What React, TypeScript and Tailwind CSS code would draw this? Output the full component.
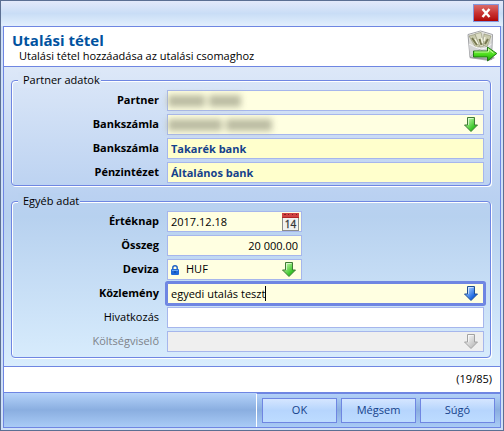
import { useId, type ReactNode } from "react";
import { clsx } from "clsx";

const arrowColors = {
  green: { edge: "#3f7a35", from: "#b4f29a", to: "#35c425" },
  blue: { edge: "#1f4f94", from: "#9cc8ff", to: "#1a66e0" },
  gray: { edge: "#a2a2a2", from: "#f0f0f0", to: "#c6c6c6" },
};

function ArrowIcon({ color }: { color: keyof typeof arrowColors }) {
  const id = useId();
  const c = arrowColors[color];
  return (
    <svg width="14" height="15" viewBox="0 0 14 15" aria-hidden="true">
      <defs>
        <linearGradient id={id} x1="0" y1="0" x2="1" y2="1">
          <stop offset="0.2" stopColor={c.from} />
          <stop offset="0.7" stopColor={c.to} />
        </linearGradient>
      </defs>
      <path d="M3.5 .5h7v7.500h3L7 14.500.500 8h3z" fill={`url(#${id})`} stroke={c.edge} />
      <path d="M4.500 8V1.500h5" fill="none" stroke="#fff" strokeOpacity=".55" />
    </svg>
  );
}

function CalendarIcon() {
  return (
    <svg width="17" height="18" viewBox="0 0 17 18" aria-hidden="true">
      <rect x=".5" y=".5" width="16" height="17" fill="#f1f1ef" stroke="#8c8c8c" />
      <rect width="17" height="5" fill="#cf4242" />
      <path d="M0 4.500h17" stroke="#b02626" />
      <path d="M2 1.500h2M6 1.500h1M10 1.500h1M14 1.500h1" stroke="#7e2020" />
      <text x="8.500" y="15" textAnchor="middle" fontSize="10" fill="#333" stroke="#333" strokeWidth=".3" fontFamily="Open Sans, sans-serif">
        14
      </text>
    </svg>
  );
}

function LockIcon() {
  return (
    <svg width="8" height="10" viewBox="0 0 8 10" className="shrink-0" aria-hidden="true">
      <path d="M1.800 5V2.800a2.200 2 0 0 1 4.400 0V5" fill="none" stroke="#1c5fc4" strokeWidth="1.400" />
      <rect y="4" width="8" height="6" rx="1" fill="#1d68d8" />
      <path d="M1 5.500h6" stroke="#69a5f5" />
      <path d="M4 6v2" stroke="#0c3e8c" />
    </svg>
  );
}

function EnvelopeIcon() {
  return (
    <svg width="31" height="32" viewBox="0 0 31 32" aria-hidden="true">
      <defs>
        <linearGradient id="paper" x1="0" y1="0" x2="0" y2="1">
          <stop offset="0" stopColor="#f6f6f6" />
          <stop offset="1" stopColor="#b9babd" />
        </linearGradient>
        <linearGradient id="send" x1="0" y1="0" x2="0" y2="1">
          <stop offset="0" stopColor="#a5f56c" />
          <stop offset="0.5" stopColor="#4fe01f" />
          <stop offset="1" stopColor="#1c9c0a" />
        </linearGradient>
      </defs>
      <path d="M2 28l20 3 6-3-4-3z" fill="#000" opacity=".3" />
      <path d="M1 4.500L13.500 1l12 3.500-1 25L3 27.500z" fill="url(#paper)" stroke="#8a8c8f" strokeWidth=".8" />
      <path d="M2 5L13.500 1.500l11 4-1 9-9.500 4L3 14z" fill="#dcdcd2" />
      <g stroke="#85866a" strokeWidth=".5">
        <path d="M2 6l6-1.500 6 11-5 2.500z" fill="#c9caac" />
        <path d="M8 4l6-1.500 3 13.500-4 1z" fill="#dcddc4" />
        <path d="M17 4l7 2-4 11-4-2z" fill="#c9caac" />
      </g>
      <path d="M5 8l5 7M12.500 9l2 6M21 9l-3 5" stroke="#76774f" strokeWidth="2" />
      <path d="M8 9l3 5M14.500 8l1 5M18 7l-1 4" stroke="#f4f4e2" strokeWidth="1.300" />
      <path d="M2 14l6 3 6 2 5-1 5.500-4-.5 14.500-21-2z" fill="#d4d5d7" />
      <path d="M3 27l10-8L24 28" fill="none" stroke="#a2a4a7" strokeWidth=".7" />
      <path d="M2 14l6 3 6 2 5-1 5.500-4" fill="none" stroke="#f6f6f6" />
      <path d="M6.500 21h14v-4l9.300 6.500-9.300 7.500v-4h-14z" fill="url(#send)" stroke="#17730c" strokeWidth=".9" />
      <path d="M7.500 22h14v-2.800l5 4" fill="none" stroke="#d8ffb8" strokeWidth=".8" />
    </svg>
  );
}

function Group({ title, legendClass, className, children }: { title: string; legendClass: string; className?: string; children: ReactNode }) {
  return (
    <fieldset className={clsx("min-w-0 rounded border border-[#6f86e2] pr-[6px] pl-2 pt-[2px] shadow-[1px_1px_0_#fff,inset_1px_1px_0_#fff]", className)}>
      <legend className={clsx("-ml-[2px] h-4 pr-px pl-[5px] leading-4", legendClass)}>{title}</legend>
      <div className="flex flex-col gap-[3px]">{children}</div>
    </fieldset>
  );
}

function Row({ id, label, light, children }: { id: string; label: string; light?: boolean; children: ReactNode }) {
  return (
    <div className="flex h-[21px] items-center gap-2">
      <label htmlFor={id} className={clsx("w-[139px] shrink-0 text-right", light ? "font-normal" : "font-bold", id === "cost" && "text-[#7d8289]")}>
        {label}
      </label>
      {children}
    </div>
  );
}

const box = "relative flex h-[21px] items-center border";
const plain = "border-[#a6b6ec]";
const control = "h-full min-w-0 flex-1 appearance-none bg-transparent px-[3px] outline-none";
const iconSlot = "pointer-events-none absolute right-[5px]";

// Redacted value: soft gray smudges over an empty control
function Redacted({ parts }: { parts: string[] }) {
  return (
    <div className="pointer-events-none absolute left-0 flex gap-1 blur-[3px]" aria-hidden="true">
      {parts.map((w) => (
        <span key={w} className={clsx("h-3 bg-[#bcbda3]", w)} />
      ))}
    </div>
  );
}

const button =
  "h-[25px] w-[75px] border border-[#6f86e2] bg-gradient-to-b from-[#d5e6ff] via-[#b6d5fd] to-[#bddcff] text-[#15428b]";

export default function App() {
  return (
    <div className="border border-[#5b6f93] bg-[#cfe0f7] font-['Open_Sans','Noto_Sans',sans-serif] text-[11px] text-black">
      {/* Title bar */}
      <div className="flex h-[25px] items-start justify-end bg-gradient-to-b from-[#e3e9fa] via-[#c9ddf6] to-[#e2effd] pt-[3px] pr-1">
        <button aria-label="Bezárás" className="flex h-[18px] w-[26px] items-center justify-center border border-[#8495dc] bg-gradient-to-b from-[#d96a6a] via-[#c93232] to-[#b00000]">
          <svg width="10" height="10" viewBox="0 0 10 10" aria-hidden="true">
            <path d="M1.500 1l7 8M8.500 1l-7 8" stroke="#fff" strokeWidth="2.400" />
          </svg>
        </button>
      </div>

      <div className="mx-[2px] mb-[2px] border border-[#6f86e2]">
        {/* Header */}
        <header className="flex h-[39px] justify-between bg-white pl-2">
          <div>
            <h1 className="mt-[3px] text-[15px] leading-5 font-bold text-[#00529f]">Utalási tétel</h1>
            <p className="pl-[7px] leading-3">Utalási tétel hozzáadása az utalási csomaghoz</p>
          </div>
          <div className="pt-[3px] pr-[2px]">
            <EnvelopeIcon />
          </div>
        </header>

        {/* Form */}
        <main className="flex flex-col gap-[7px] border-y border-[#6f86e2] bg-[linear-gradient(#dde8f8,#bad1f1_43%,#b7d1ef_50%,#d9edfd)] px-[7px] pt-[5px] pb-2 pr-[9px]">
          <Group title="Partner adatok" legendClass="bg-[#dae6f7]" className="pb-[2px]">
            <Row id="partner" label="Partner">
              <div className={clsx(box, plain, "flex-1 bg-[#ffffe1]")}>
                <input id="partner" className={control} readOnly />
                <Redacted parts={["w-[37px]", "w-[32px]"]} />
              </div>
            </Row>
            <Row id="account" label="Bankszámla">
              <div className={clsx(box, plain, "flex-1 bg-[#ffffe1]")}>
                <select id="account" className={control} />
                <Redacted parts={["w-[54px]", "w-[46px]"]} />
                <span className={iconSlot}><ArrowIcon color="green" /></span>
              </div>
            </Row>
            <Row id="bank" label="Bankszámla">
              <div className={clsx(box, plain, "flex-1 bg-[#ffffcc]")}>
                <input id="bank" className={clsx(control, "font-bold text-[#15428b]")} defaultValue="Takarék bank" readOnly />
              </div>
            </Row>
            <Row id="institute" label="Pénzintézet">
              <div className={clsx(box, plain, "flex-1 bg-[#ffffcc]")}>
                <input id="institute" className={clsx(control, "font-bold text-[#15428b]")} defaultValue="Általános bank" readOnly />
              </div>
            </Row>
          </Group>

          <Group title="Egyéb adat" legendClass="bg-[#b9d1f0]" className="pb-[5px]">
            <Row id="date" label="Értéknap">
              <div className={clsx(box, plain, "w-[135px] bg-[#ffffe1]")}>
                <input id="date" className={control} defaultValue="2017.12.18" />
                <button aria-label="Naptár" className="mr-[2px] shrink-0"><CalendarIcon /></button>
              </div>
            </Row>
            <Row id="amount" label="Összeg">
              <div className={clsx(box, plain, "w-[135px] bg-[#ffffe1]")}>
                <input id="amount" className={clsx(control, "text-right")} defaultValue="20 000.00" />
              </div>
            </Row>
            <Row id="currency" label="Deviza">
              <div className={clsx(box, plain, "w-[135px] bg-[#ffffe1] pl-[3px]")}>
                <LockIcon />
                <select id="currency" className={clsx(control, "ml-1")}>
                  <option>HUF</option>
                </select>
                <span className={iconSlot}><ArrowIcon color="green" /></span>
              </div>
            </Row>
            <Row id="note" label="Közlemény">
              <div className={clsx(box, "flex-1 rounded-[1px] border-[#6f86e2] bg-[#ffffe1] ring-2 ring-[#6f86e2]")}>
                <input id="note" className="field-sizing-content h-full bg-transparent pl-[3px] outline-none" defaultValue="egyedi utalás teszt" />
                <span className="h-[15px] w-px bg-black" />
                <button aria-label="Lista" className="mr-[5px] ml-auto"><ArrowIcon color="blue" /></button>
              </div>
            </Row>
            <Row id="reference" label="Hivatkozás" light>
              <div className={clsx(box, plain, "flex-1 bg-white")}>
                <input id="reference" className={control} />
              </div>
            </Row>
            <Row id="cost" label="Költségviselő" light>
              <div className={clsx(box, plain, "flex-1 bg-[#efefef]")}>
                <select id="cost" className={control} disabled />
                <span className={iconSlot}><ArrowIcon color="gray" /></span>
              </div>
            </Row>
          </Group>
        </main>

        {/* Character counter */}
        <div className="flex h-[25px] items-center justify-end bg-white pr-2">(19/85)</div>

        {/* Buttons */}
        <footer className="flex h-[35px] justify-end border-t border-[#6f86e2] bg-gradient-to-b from-[#b5d3fa] via-[#8aaee0] to-[#a9cbf6]">
          <div className="flex gap-1 border-t border-l border-t-[#6f86e2] border-l-white pt-1 pr-[5px] pl-[5px]">
            <button className={button}>OK</button>
            <button className={button}>Mégsem</button>
            <button className={button}>Súgó</button>
          </div>
        </footer>
      </div>
    </div>
  );
}
